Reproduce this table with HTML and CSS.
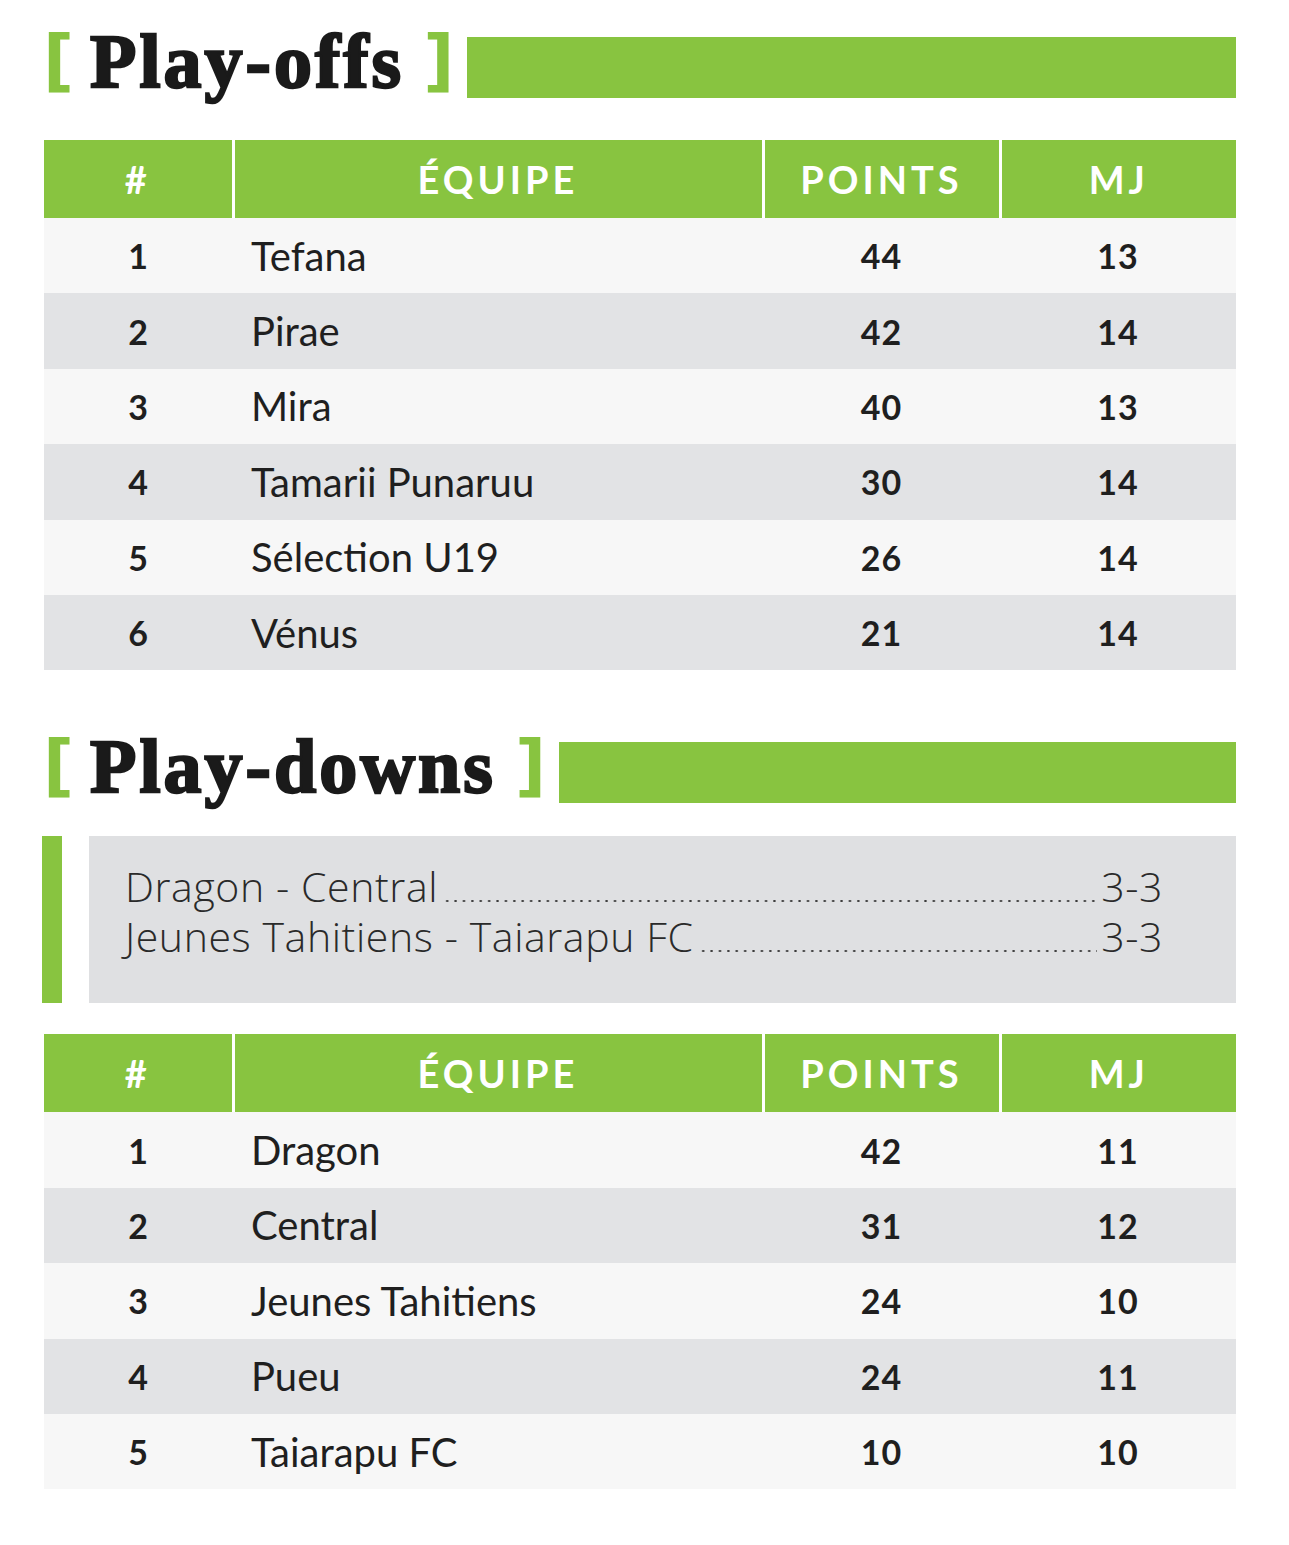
FILE: index.html
```html
<!DOCTYPE html>
<html lang="fr">
<head>
<meta charset="utf-8">
<title>Classement</title>
<link rel="stylesheet" href="styles.css">
</head>
<body>
<main class="page">
  <section class="block block-first">
    <h2 class="title"><span class="br br-open">[</span><span class="title-text">Play-offs</span><span class="br br-close">]</span><span class="title-bar"></span></h2>
    <table class="standings">
      <colgroup><col class="c1"><col class="c2"><col class="c3"><col class="c4"></colgroup>
      <thead><tr><th>#</th><th>ÉQUIPE</th><th>POINTS</th><th>MJ</th></tr></thead>
      <tbody>
        <tr><td class="num">1</td><td class="team">Tefana</td><td class="num">44</td><td class="num">13</td></tr>
        <tr><td class="num">2</td><td class="team">Pirae</td><td class="num">42</td><td class="num">14</td></tr>
        <tr><td class="num">3</td><td class="team">Mira</td><td class="num">40</td><td class="num">13</td></tr>
        <tr><td class="num">4</td><td class="team">Tamarii Punaruu</td><td class="num">30</td><td class="num">14</td></tr>
        <tr><td class="num">5</td><td class="team">Sélection U19</td><td class="num">26</td><td class="num">14</td></tr>
        <tr><td class="num">6</td><td class="team">Vénus</td><td class="num">21</td><td class="num">14</td></tr>
      </tbody>
    </table>
  </section>

  <section class="block block-second">
    <h2 class="title"><span class="br br-open">[</span><span class="title-text">Play-downs</span><span class="br br-close">]</span><span class="title-bar"></span></h2>
    <div class="results">
      <div class="results-accent"></div>
      <div class="results-box">
        <div class="result"><span class="match">Dragon - Central</span><span class="leader"></span><span class="score">3-3</span></div>
        <div class="result"><span class="match">Jeunes Tahitiens - Taiarapu FC</span><span class="leader"></span><span class="score">3-3</span></div>
      </div>
    </div>
    <table class="standings">
      <colgroup><col class="c1"><col class="c2"><col class="c3"><col class="c4"></colgroup>
      <thead><tr><th>#</th><th>ÉQUIPE</th><th>POINTS</th><th>MJ</th></tr></thead>
      <tbody>
        <tr><td class="num">1</td><td class="team">Dragon</td><td class="num">42</td><td class="num">11</td></tr>
        <tr><td class="num">2</td><td class="team">Central</td><td class="num">31</td><td class="num">12</td></tr>
        <tr><td class="num">3</td><td class="team">Jeunes Tahitiens</td><td class="num">24</td><td class="num">10</td></tr>
        <tr><td class="num">4</td><td class="team">Pueu</td><td class="num">24</td><td class="num">11</td></tr>
        <tr><td class="num">5</td><td class="team">Taiarapu FC</td><td class="num">10</td><td class="num">10</td></tr>
      </tbody>
    </table>
  </section>
</main>
</body>
</html>
```

FILE: styles.css
```css
html, body {
  margin: 0;
  padding: 0;
  background: #ffffff;
}

.page {
  width: 1192px;
  margin-left: 44px;
  padding-top: 16px;
  font-family: Lato, "Open Sans", sans-serif;
  color: #1f1f1f;
}

.block-second {
  margin-top: 51px;
}

.title {
  display: flex;
  align-items: center;
  height: 90px;
  margin: 0 0 34px 0;
  font-weight: normal;
}

.block-second .title {
  margin-bottom: 25px;
}

.br {
  font-family: "DejaVu Sans", sans-serif;
  font-weight: bold;
  font-size: 68px;
  color: #88c440;
  line-height: 1;
}

.br-open {
  margin-left: -1px;
  margin-right: 16px;
}

.br-close {
  margin-left: 19px;
  margin-right: 13px;
}

.title-text {
  font-family: "Liberation Serif", serif;
  font-weight: bold;
  font-size: 76px;
  line-height: 1;
  color: #1a1a1a;
  letter-spacing: 3px;
  -webkit-text-stroke: 2.4px #1a1a1a;
}

.title-bar {
  flex: 1;
  height: 61px;
  background: #88c440;
  margin-top: 12px;
}

.standings {
  width: 1192px;
  border-collapse: collapse;
  table-layout: fixed;
}

.c1 { width: 189px; }
.c2 { width: 530px; }
.c3 { width: 237px; }
.c4 { width: 236px; }

.standings th {
  background: #88c440;
  color: #ffffff;
  height: 78px;
  padding: 0;
  font-family: Lato, sans-serif;
  font-weight: bold;
  font-size: 38px;
  letter-spacing: 4px;
  text-align: center;
  border-left: 3px solid #ffffff;
}

.standings th:first-child {
  border-left: none;
}

.standings td {
  height: 75.4px;
  padding: 0;
  color: #1f1f1f;
}

.standings tbody tr:nth-child(odd) td {
  background: #f7f7f7;
}

.standings tbody tr:nth-child(even) td {
  background: #e2e3e5;
}

.standings td.num {
  text-align: center;
  font-weight: bold;
  font-size: 34px;
  letter-spacing: 1px;
}

.standings td.team {
  padding-left: 18px;
  font-size: 40px;
}

.results {
  display: flex;
  gap: 27px;
  margin: 0 0 31px -2px;
}

.results-accent {
  flex: none;
  width: 20px;
  background: #88c440;
}

.results-box {
  flex: 1;
  min-width: 0;
  height: 167px;
  background: #dfe0e2;
  padding: 25px 73px 0 36px;
  box-sizing: border-box;
  font-family: "Open Sans", sans-serif;
  font-weight: 300;
  font-size: 41px;
  letter-spacing: 0.6px;
  line-height: 50px;
  color: #2a2a2a;
}

.result {
  display: flex;
  white-space: nowrap;
}

.match, .score {
  flex: none;
}

.leader {
  flex: 1;
  min-width: 0;
  margin: 0 4px 0 3px;
  background-image: radial-gradient(circle, #3a3a3a 0.9px, rgba(58, 58, 58, 0) 1.4px);
  background-size: 8.4px 4px;
  background-repeat: repeat-x;
  background-position: 2px 38px;
}
```
